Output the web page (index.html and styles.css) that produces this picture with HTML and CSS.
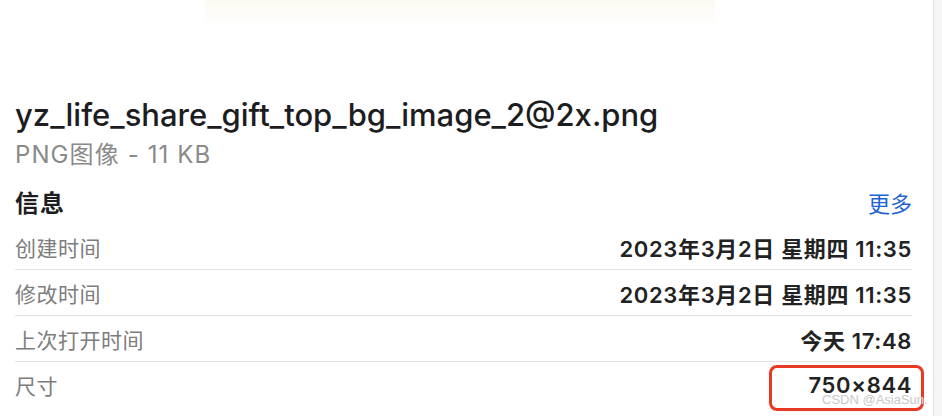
FILE: index.html
```html
<!DOCTYPE html>
<html lang="zh-CN">
<head>
<meta charset="utf-8">
<link rel="stylesheet" href="styles.css">
</head>
<body>
<div class="panel">
  <div class="preview"></div>
  <h1 class="name">yz_life_share_gift_top_bg_image_2@2x.png</h1>
  <div class="kind">PNG图像 - 11 KB</div>
  <div class="section-head">
    <span class="section-title">信息</span>
    <span class="more">更多</span>
  </div>
  <div class="row"><span class="label">创建时间</span><span class="value">2023年3月2日 星期四 11:35</span></div>
  <div class="row"><span class="label">修改时间</span><span class="value">2023年3月2日 星期四 11:35</span></div>
  <div class="row"><span class="label">上次打开时间</span><span class="value">今天 17:48</span></div>
  <div class="row last"><span class="label">尺寸</span><span class="value">750×844</span>
    <span class="highlight"></span>
  </div>
  <span class="watermark">CSDN @AsiaSun.</span>
</div>
</body>
</html>
```
FILE: styles.css
```css
html, body {
  margin: 0;
  padding: 0;
}
body {
  background: #f5f5f5;
  width: 942px;
  height: 416px;
  overflow: hidden;
  font-family: "Inter", "Noto Sans CJK SC", sans-serif;
}
.panel {
  position: relative;
  width: 933px;
  height: 416px;
  background: #ffffff;
  border-right: 1px solid #e2e2e2;
}
.preview {
  width: 510px;
  height: 26px;
  margin-left: 205px;
  background: linear-gradient(#fbf9f2, #fdfcf9 60%, #ffffff);
}
.name {
  margin: 72px 0 0 15px;
  font-size: 31px;
  line-height: 34px;
  font-weight: 500;
  color: #1d1d1f;
  letter-spacing: 0;
  white-space: nowrap;
}
.kind {
  margin: 8px 0 0 15px;
  font-size: 24px;
  line-height: 30px;
  color: #8a8a8a;
  letter-spacing: 1.1px;
}
.section-head {
  margin: 9px 21px 0 15px;
  height: 45px;
  display: flex;
  align-items: center;
  justify-content: space-between;
}
.section-title {
  font-size: 24px;
  font-weight: 700;
  color: #1d1d1f;
  letter-spacing: 1px;
}
.more {
  font-size: 22px;
  color: #1f63d4;
}
.row {
  position: relative;
  margin: 0 21px 0 15px;
  height: 45px;
  border-bottom: 1px solid #e3e3e3;
  display: flex;
  align-items: center;
  justify-content: space-between;
}
.row.last {
  border-bottom: none;
}
.label {
  font-size: 21px;
  color: #7d7d7d;
  letter-spacing: 0.5px;
}
.value {
  font-size: 22px;
  font-weight: 600;
  color: #222222;
  letter-spacing: 0.65px;
}
.highlight {
  position: absolute;
  right: -12px;
  top: 3px;
  width: 149px;
  height: 40px;
  border: 3px solid #e83a22;
  border-radius: 8px;
}
.watermark {
  position: absolute;
  left: 822px;
  top: 392px;
  font-family: "Liberation Sans", sans-serif;
  font-size: 13px;
  color: #c8c8c8;
  text-shadow: 0 0 1px #ffffff;
}
```
